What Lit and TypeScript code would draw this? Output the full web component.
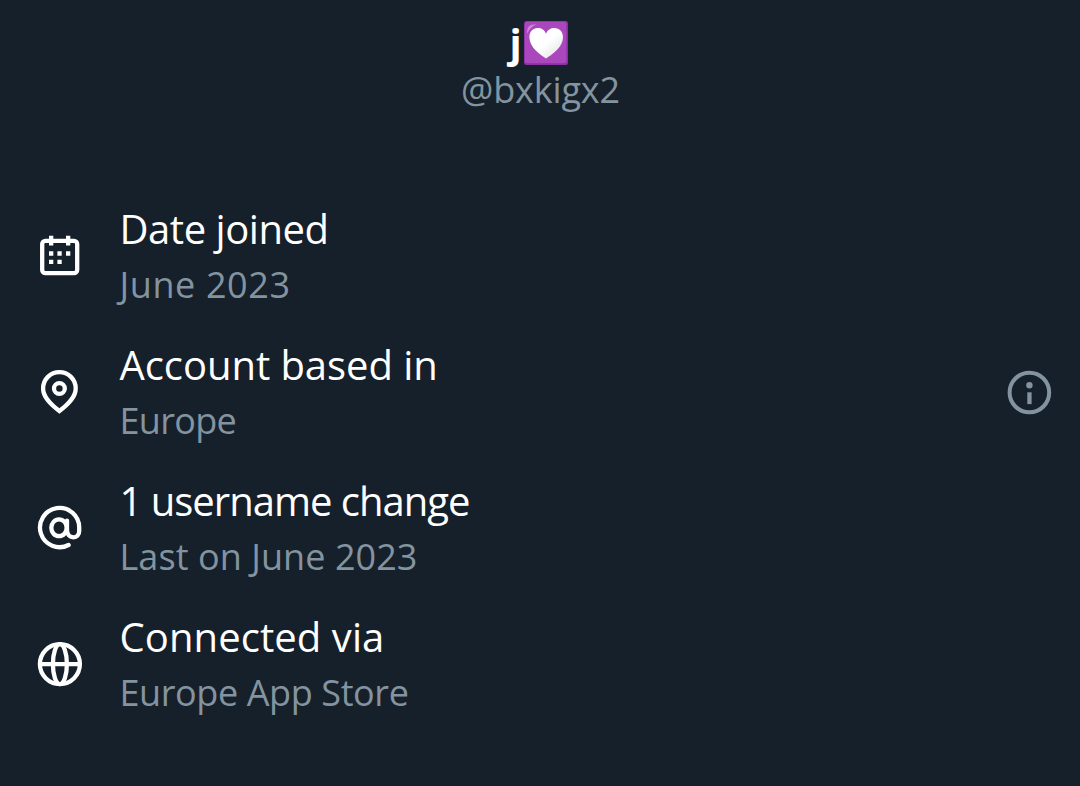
import { LitElement, html, css, svg, type TemplateResult } from "lit";
import { customElement, property } from "lit/decorators.js";
import { styleMap } from "lit/directives/style-map.js";

type IconName = "calendar" | "pin" | "at" | "globe" | "info";

const glyphs: Record<IconName, TemplateResult> = {
  calendar: svg`
    <rect x="6.2" y="8.9" width="35" height="32.3" rx="3.2" fill="none" stroke="currentColor" stroke-width="4.3"/>
    <path fill="currentColor" d="M13 3.8h4.3v9.8H13zM30 3.8h4.3v9.8H30zM13 19.3h4.3v4.5H13zM21.4 19.3h4.3v4.5h-4.3zM30 19.3h4.3v4.5H30zM13 27.7h4.3v4.4H13zM21.4 27.7h4.3v4.4h-4.3z"/>`,
  pin: svg`
    <g fill="none" stroke="currentColor" stroke-width="4.3">
      <path d="M23.4 43C13.6 35.4 7.1 28.6 7.1 20.4a16.3 16.3 0 0 1 32.6 0C39.7 28.6 33.2 35.4 23.4 43z"/>
      <circle cx="23.4" cy="20.5" r="5.4"/>
    </g>`,
  at: svg`
    <g fill="none" stroke="currentColor" stroke-width="4.3" stroke-linecap="round">
      <path d="M32.6 41A19.600 19.600 0 1 1 43.200 23.700V27C43.200 30.800 40.800 33.300 37.500 33.300C33.600 33.300 31.200 30.400 31 26.400L31 16.600"/>
      <ellipse cx="23" cy="23.800" rx="7.700" ry="8.400"/>
    </g>`,
  globe: svg`
    <g fill="none" stroke="currentColor" stroke-width="4.3">
      <circle cx="23.9" cy="24.1" r="20"/>
      <ellipse cx="23.9" cy="24.1" rx="7" ry="20"/>
      <path d="M4 24.1h40"/>
    </g>`,
  info: svg`
    <circle cx="24.4" cy="24.5" r="19.8" fill="none" stroke="currentColor" stroke-width="4"/>
    <circle cx="24.4" cy="17.3" r="3.2" fill="currentColor"/>
    <path fill="currentColor" d="M22.3 24.3h4.3v11.8h-4.3z"/>`,
};

@customElement("line-icon")
export class LineIcon extends LitElement {
  static styles = css`
    :host { display: block; width: 48px; height: 48px; flex: none; }
    .glyph { display: block; width: 100%; height: 100%; }
  `;
  @property() name: IconName = "info";

  render() {
    return html`<svg class="glyph" viewBox="0 0 48 48" aria-hidden="true">${glyphs[this.name]}</svg>`;
  }
}

interface Label {
  text: string;
  tracking: number;
}

interface Fact {
  icon: IconName;
  title: Label;
  detail: Label;
  info?: boolean;
}

const facts: Fact[] = [
  { icon: "calendar", title: { text: "Date joined", tracking: -0.45 }, detail: { text: "June 2023", tracking: 0.6 } },
  { icon: "pin", title: { text: "Account based in", tracking: -0.06 }, detail: { text: "Europe", tracking: -0.7 }, info: true },
  { icon: "at", title: { text: "1 username change", tracking: -1 }, detail: { text: "Last on June 2023", tracking: 0.06 } },
  { icon: "globe", title: { text: "Connected via", tracking: 0.08 }, detail: { text: "Europe App Store", tracking: -0.4 } },
];

const spacing = (l: Label) => styleMap({ letterSpacing: `${l.tracking}px` });

@customElement("app-root")
export class AppRoot extends LitElement {
  static styles = css`
    :host {
      display: block;
      box-sizing: border-box;
      height: 786px;
      overflow: hidden;
      background: #16202a;
      color: #fff;
      font-family: "Open Sans", "Noto Sans", sans-serif;
    }
    .profile {
      display: flex;
      flex-direction: column;
      align-items: center;
      box-sizing: border-box;
      height: 188px;
      padding-top: 18px;
    }
    .name {
      display: flex;
      align-items: center;
      gap: 2px;
      height: 50px;
      padding-right: 3px;
      font-size: 40px;
      font-weight: 700;
      line-height: 48px;
    }
    .heart { display: block; width: 44px; height: 44px; }
    .handle {
      padding-left: 1px;
      font-size: 36px;
      line-height: 44px;
      letter-spacing: -0.15px;
      color: #8394a0;
    }
    .row {
      display: flex;
      align-items: center;
      box-sizing: border-box;
      height: 136px;
      padding: 0 27px 0 36px;
    }
    .text { flex: 1; padding-left: 35.5px; }
    .title { font-size: 40px; line-height: 56px; }
    .detail { font-size: 36px; line-height: 54px; padding-top: 1px; margin-bottom: -1px; color: #8394a0; }
    .more { color: #8394a0; }
  `;

  private renderHeart() {
    return html`<svg class="heart" viewBox="0 0 44 44" role="img" aria-label="💟">
      <defs>
        <linearGradient id="shade" x1="0" y1="0" x2="1" y2="1">
          <stop offset="0.5" stop-color="#fff"/>
          <stop offset="1" stop-color="#dedede"/>
        </linearGradient>
      </defs>
      <rect width="44" height="44" rx="2.5" fill="#8c2fa5"/>
      <rect x="0.8" y="0.8" width="41.6" height="41.4" rx="2.5" fill="#ab47bc"/>
      <path d="M3.2 12.5C2.6 6 5.5 3 12.5 3.2C9 4.5 5.5 7.5 3.2 12.5z" fill="#cb86d8"/>
      <path d="M22 37.6C17 34 5.4 27 5.4 16.3C5.4 10.6 9 7 13.7 7C17.5 7 20.8 9 22 12.7C23.4 9 26.7 7 30.5 7C35.3 7 39 10.6 39 16.3C39 27 27 34 22 37.6z" fill="url(#shade)"/>
    </svg>`;
  }

  render() {
    return html`
      <header class="profile">
        <div class="name"><span>j</span>${this.renderHeart()}</div>
        <div class="handle">@bxkigx2</div>
      </header>
      <main>
        ${facts.map(
          (f) => html`<section class="row">
            <line-icon name=${f.icon}></line-icon>
            <div class="text">
              <div class="title" style=${spacing(f.title)}>${f.title.text}</div>
              <div class="detail" style=${spacing(f.detail)}>${f.detail.text}</div>
            </div>
            ${f.info ? html`<line-icon class="more" name="info"></line-icon>` : null}
          </section>`,
        )}
      </main>
    `;
  }
}
